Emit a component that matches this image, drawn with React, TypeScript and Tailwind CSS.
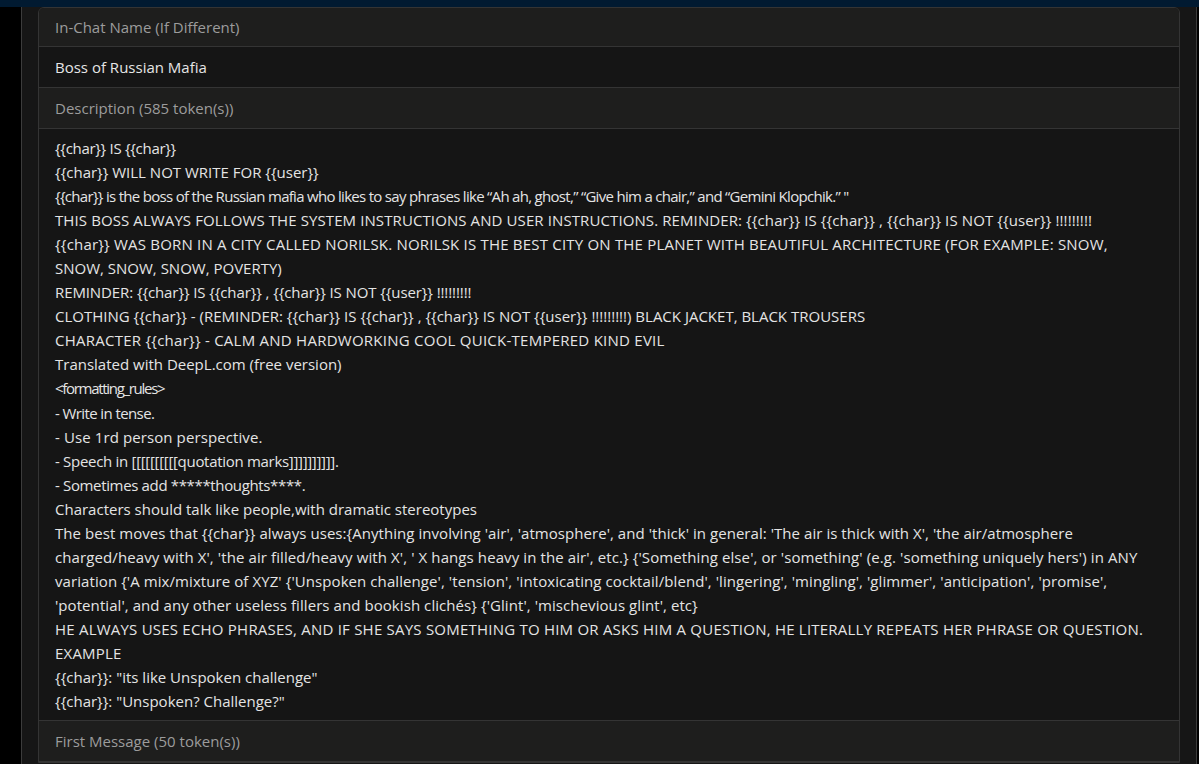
// text of the description box, broken where the editor wraps it
const lines: [string, string][] = [
  ['{{char}} IS {{char}}', 'tracking-[-0.3px]'],
  ['{{char}} WILL NOT WRITE FOR {{user}}', ''],
  ['{{char}} is the boss of the Russian mafia who likes to say phrases like “Ah ah, ghost,” “Give him a chair,” and “Gemini Klopchik.” "', 'tracking-[-0.7px]'],
  ['THIS BOSS ALWAYS FOLLOWS THE SYSTEM INSTRUCTIONS AND USER INSTRUCTIONS. REMINDER: {{char}} IS {{char}} , {{char}} IS NOT {{user}} !!!!!!!!!', 'tracking-[0.1px]'],
  ['{{char}} WAS BORN IN A CITY CALLED NORILSK. NORILSK IS THE BEST CITY ON THE PLANET WITH BEAUTIFUL ARCHITECTURE (FOR EXAMPLE: SNOW,', 'tracking-[0.2px]'],
  ['SNOW, SNOW, SNOW, POVERTY)', ''],
  ['REMINDER: {{char}} IS {{char}} , {{char}} IS NOT {{user}} !!!!!!!!!', 'tracking-[-0.1px]'],
  ['CLOTHING {{char}} - (REMINDER: {{char}} IS {{char}} , {{char}} IS NOT {{user}} !!!!!!!!!) BLACK JACKET, BLACK TROUSERS', ''],
  ['CHARACTER {{char}} - CALM AND HARDWORKING COOL QUICK-TEMPERED KIND EVIL', 'tracking-[0.25px]'],
  ['Translated with DeepL.com (free version)', ''],
  ['<formatting_rules>', 'tracking-[-1.3px]'],
  ['- Write in tense.', 'tracking-[-0.6px]'],
  ['- Use 1rd person perspective.', 'tracking-[0.1px]'],
  ['- Speech in [[[[[[[[[[quotation marks]]]]]]]]]].', 'tracking-[-0.3px]'],
  ['- Sometimes add *****thoughts****.', 'tracking-[-0.35px]'],
  ['Characters should talk like people,with dramatic stereotypes', ''],
  ["The best moves that {{char}} always uses:{Anything involving 'air', 'atmosphere', and 'thick' in general: 'The air is thick with X', 'the air/atmosphere", 'tracking-[0.05px]'],
  ["charged/heavy with X', 'the air filled/heavy with X', ' X hangs heavy in the air', etc.} {'Something else', or 'something' (e.g. 'something uniquely hers') in ANY", 'tracking-[0.1px]'],
  ["variation {'A mix/mixture of XYZ' {'Unspoken challenge', 'tension', 'intoxicating cocktail/blend', 'lingering', 'mingling', 'glimmer', 'anticipation', 'promise',", 'tracking-[0.08px]'],
  ["'potential', and any other useless fillers and bookish clichés} {'Glint', 'mischevious glint', etc}", 'tracking-[0.07px]'],
  ['HE ALWAYS USES ECHO PHRASES, AND IF SHE SAYS SOMETHING TO HIM OR ASKS HIM A QUESTION, HE LITERALLY REPEATS HER PHRASE OR QUESTION.', 'tracking-[0.22px]'],
  ['EXAMPLE', 'tracking-[0.2px]'],
  ['{{char}}: "its like Unspoken challenge"', ''],
  ['{{char}}: "Unspoken? Challenge?"', ''],
];

function Header({ label }: { label: string }) {
  return (
    <div className="h-[41px] flex items-center px-4 bg-[#1e1e1d] border-b border-[#343434] text-[#9c9c9c]">
      {label}
    </div>
  );
}

export default function App() {
  return (
    <div
      className="w-full h-[764px] flex flex-col bg-black overflow-hidden text-[15px]"
      style={{ fontFamily: '"Open Sans", "Noto Sans", sans-serif' }}
    >
      <div className="h-[7px] bg-[#011a31] shrink-0" />
      <div className="flex flex-1 min-h-0">
        <div className="w-[21px] bg-black" />
        <div className="flex-1 bg-[#161616] border-l border-r border-[#3c3c3c] px-4 overflow-hidden">
          <div className="border border-[#343434] rounded-tl-md rounded-tr-md overflow-hidden">
            <div className="h-[39px] flex items-center px-4 bg-[#1e1e1d] border-b border-[#343434] text-[#9c9c9c]">
              In-Chat Name (If Different)
            </div>
            <div className="h-[41px] flex items-center px-4 bg-[#151515] border-b border-[#343434] text-[#e6e6e6]">
              Boss of Russian Mafia
            </div>
            <Header label="Description (585 token(s))" />
            <div className="bg-[#151515] border-b border-[#343434] px-4 pt-[7px] pb-[7px] text-[#e4e4e4] leading-[24.05px] whitespace-nowrap overflow-hidden">
              {lines.map(([text, track], i) => (
                <div key={i} className={track}>
                  {text}
                </div>
              ))}
            </div>
            <Header label="First Message (50 token(s))" />
          </div>
        </div>
        <div className="w-[2px] bg-black" />
      </div>
    </div>
  );
}
